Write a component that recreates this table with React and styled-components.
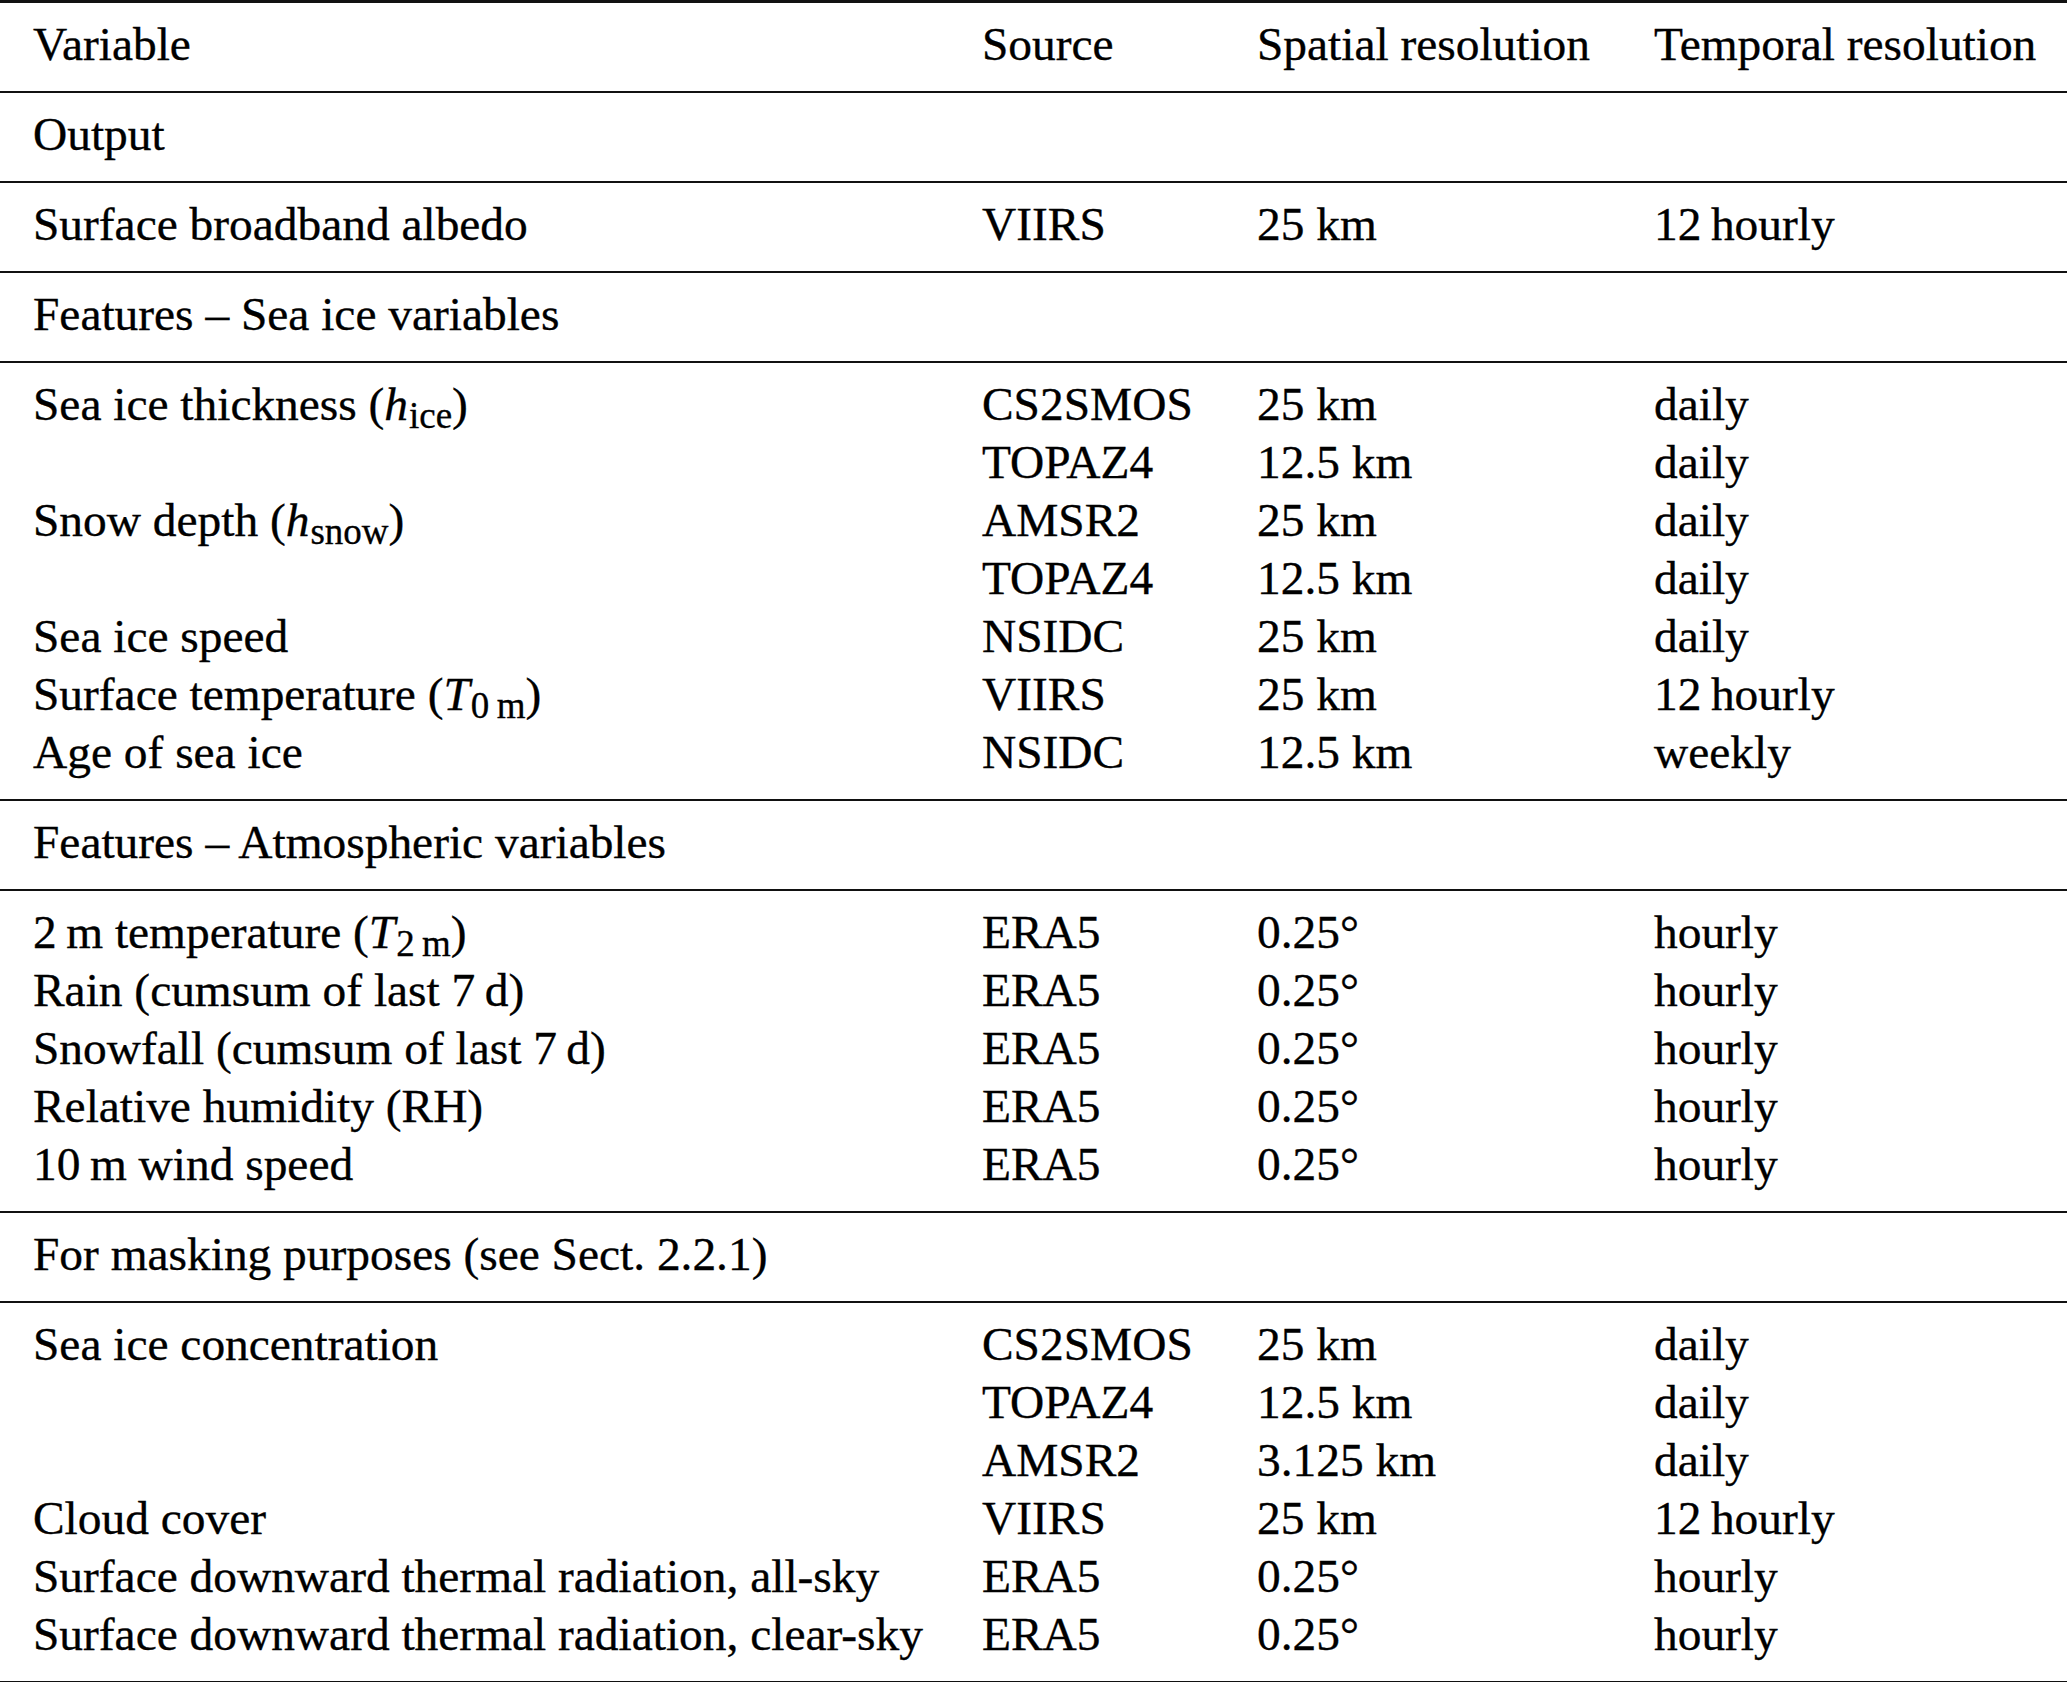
import styled, { createGlobalStyle } from 'styled-components';

const GlobalStyle = createGlobalStyle`
    html, body {
        margin: 0;
        padding: 0;
        background: #ffffff;
    }
    body {
        font-family: "Liberation Serif", "Times New Roman", serif;
        color: #000000;
    }
`;

const TableWrapper = styled.div`
    width: 2067px;
    font-size: 47.4px;
    line-height: 58px;
    -webkit-text-stroke: 0.35px #000000;
`;

const Rule = styled.div`
    height: ${props => props.thick ? 3 : 2}px;
    background-color: #111111;
`;

const Block = styled.div`
    padding: 12px 0 18px;
`;

const Row = styled.div`
    display: grid;
    grid-template-columns: 949px 275px 397px 1fr;
    padding-left: 33px;
    height: 58px;
    white-space: nowrap;
`;

const Cell = styled.div``;

const Var = styled.i`
    font-style: italic;
    margin-right: 0.02em;
`;

const Sub = styled.span`
    font-size: 0.78em;
    line-height: 0;
    vertical-align: -0.22em;
`;

const THIN = '\u2009';

const sections = [
    {
        title: 'Output',
        rows: [
            ['Surface broadband albedo', 'VIIRS', '25 km', `12${THIN}hourly`],
        ],
    },
    {
        title: 'Features – Sea ice variables',
        rows: [
            [<>Sea ice thickness (<Var>h</Var><Sub>ice</Sub>)</>, 'CS2SMOS', '25 km', 'daily'],
            ['', 'TOPAZ4', '12.5 km', 'daily'],
            [<>Snow depth (<Var>h</Var><Sub>snow</Sub>)</>, 'AMSR2', '25 km', 'daily'],
            ['', 'TOPAZ4', '12.5 km', 'daily'],
            ['Sea ice speed', 'NSIDC', '25 km', 'daily'],
            [<>Surface temperature (<Var>T</Var><Sub>0{THIN}m</Sub>)</>, 'VIIRS', '25 km', `12${THIN}hourly`],
            ['Age of sea ice', 'NSIDC', '12.5 km', 'weekly'],
        ],
    },
    {
        title: 'Features – Atmospheric variables',
        rows: [
            [<>2{THIN}m temperature (<Var>T</Var><Sub>2{THIN}m</Sub>)</>, 'ERA5', '0.25°', 'hourly'],
            [`Rain (cumsum of last 7${THIN}d)`, 'ERA5', '0.25°', 'hourly'],
            [`Snowfall (cumsum of last 7${THIN}d)`, 'ERA5', '0.25°', 'hourly'],
            ['Relative humidity (RH)', 'ERA5', '0.25°', 'hourly'],
            [`10${THIN}m wind speed`, 'ERA5', '0.25°', 'hourly'],
        ],
    },
    {
        title: 'For masking purposes (see Sect. 2.2.1)',
        rows: [
            ['Sea ice concentration', 'CS2SMOS', '25 km', 'daily'],
            ['', 'TOPAZ4', '12.5 km', 'daily'],
            ['', 'AMSR2', '3.125 km', 'daily'],
            ['Cloud cover', 'VIIRS', '25 km', `12${THIN}hourly`],
            ['Surface downward thermal radiation, all-sky', 'ERA5', '0.25°', 'hourly'],
            ['Surface downward thermal radiation, clear-sky', 'ERA5', '0.25°', 'hourly'],
        ],
    },
];

const DataRow = ({ cells }) => (
    <Row>
        {cells.map((c, i) => <Cell key={i}>{c}</Cell>)}
    </Row>
);

const App = () => {
    return (
        <>
            <GlobalStyle />
            <TableWrapper>
                <Rule thick />
                <Block>
                    <DataRow cells={['Variable', 'Source', 'Spatial resolution', 'Temporal resolution']} />
                </Block>
                {sections.map(section => (
                    <div key={section.title}>
                        <Rule />
                        <Block>
                            <Row><Cell>{section.title}</Cell></Row>
                        </Block>
                        <Rule />
                        <Block>
                            {section.rows.map((r, i) => <DataRow key={i} cells={r} />)}
                        </Block>
                    </div>
                ))}
                <Rule thick />
            </TableWrapper>
        </>
    );
};

export default App;
